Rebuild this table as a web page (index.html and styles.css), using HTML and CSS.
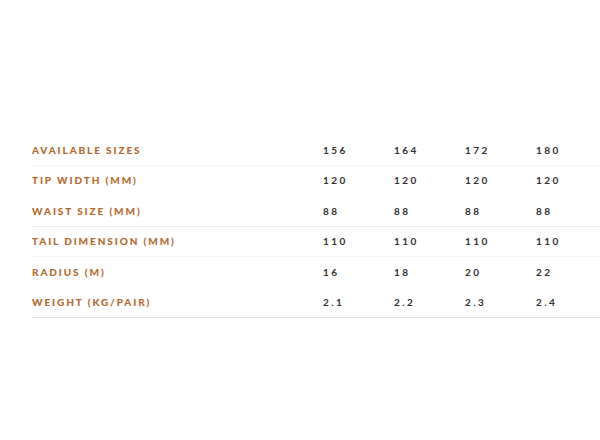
FILE: index.html
```html
<!DOCTYPE html>
<html>
<head>
<meta charset="utf-8">
<link rel="stylesheet" href="styles.css">
</head>
<body>
<div class="specs">
  <div class="row faint"><div class="label">Available Sizes</div><div class="val">156</div><div class="val">164</div><div class="val">172</div><div class="val">180</div></div>
  <div class="row none"><div class="label">Tip Width (mm)</div><div class="val">120</div><div class="val">120</div><div class="val">120</div><div class="val">120</div></div>
  <div class="row mid"><div class="label">Waist Size (mm)</div><div class="val">88</div><div class="val">88</div><div class="val">88</div><div class="val">88</div></div>
  <div class="row faint"><div class="label">Tail Dimension (mm)</div><div class="val">110</div><div class="val">110</div><div class="val">110</div><div class="val">110</div></div>
  <div class="row none"><div class="label">Radius (m)</div><div class="val">16</div><div class="val">18</div><div class="val">20</div><div class="val">22</div></div>
  <div class="row last"><div class="label">Weight (kg/pair)</div><div class="val">2.1</div><div class="val">2.2</div><div class="val">2.3</div><div class="val">2.4</div></div>
</div>
</body>
</html>
```
FILE: styles.css
```css
html, body {
  margin: 0;
  padding: 0;
  background: #ffffff;
}
body {
  width: 600px;
  height: 440px;
  font-family: "Lato", "Noto Sans", sans-serif;
}
.specs {
  padding: 135px 0 0 32px;
  display: flex;
  flex-direction: column;
}
.row {
  display: flex;
  align-items: center;
  height: 29.5px;
  border-bottom: 1px solid transparent;
}
.row.faint { border-bottom-color: #f6f6f6; }
.row.none { border-bottom-color: #fcfcfc; }
.row.mid { border-bottom-color: #eeeeee; }
.row.last { border-bottom-color: #e4e4e4; }
.label {
  width: 291px;
  flex: none;
  font-size: 10px;
  font-weight: 900;
  letter-spacing: 1.9px;
  text-transform: uppercase;
  color: #b4692b;
}
.val {
  width: 71px;
  flex: none;
  font-size: 10px;
  font-weight: 700;
  letter-spacing: 2.4px;
  color: #2f2f2f;
}
```
